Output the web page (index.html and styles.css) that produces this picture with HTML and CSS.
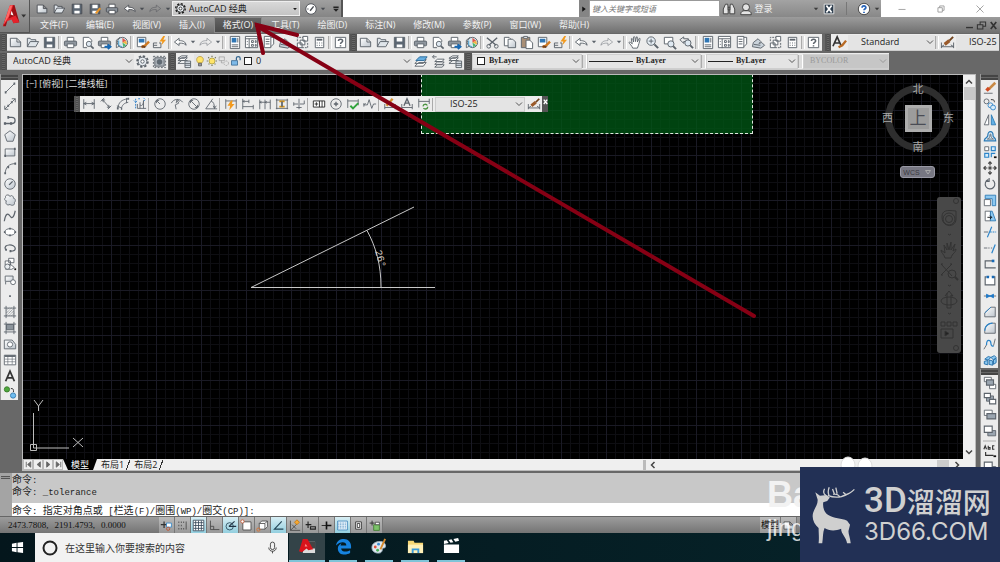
FILE: index.html
```html
<!DOCTYPE html>
<html lang="zh-CN">
<head>
<meta charset="utf-8">
<title>AutoCAD 经典</title>
<link rel="stylesheet" href="styles.css">
</head>
<body>
<svg class="defs" aria-hidden="true">
<defs>
<linearGradient id="gb" x1="0" y1="0" x2="1" y2="1"><stop offset="0" stop-color="#fff"/><stop offset="1" stop-color="#bcc4cc"/></linearGradient>
<symbol id="new" viewBox="0 0 16 16"><path fill="url(#gb)" d="M2.500 3.500h7l4 4v5h-11zM9.500 3.500v4h4"/></symbol>
<symbol id="open" viewBox="0 0 16 16"><path fill="#dfe5ea" d="M2.500 12.500v-9h3l1 1.500h5v2M2.500 12.500l3-5.500h9l-3 5.500z"/></symbol>
<symbol id="save" viewBox="0 0 16 16"><path fill="#5b6672" d="M2.500 2.500h11v11h-11z"/><path fill="#fff" stroke="none" d="M5 3h6v4H5zM5 10h6v3H5z"/></symbol>
<symbol id="saveas" viewBox="0 0 16 16"><use href="#save"/><path stroke="#e8962a" stroke-width="2.500" d="M14 7l-5 6"/></symbol>
<symbol id="print" viewBox="0 0 16 16"><path fill="#fff" d="M4.500 6.500v-4h7v4"/><rect x="1.500" y="6.500" width="13" height="5" rx="1" fill="#8e969e"/><path fill="#fff" d="M4.500 9.500h7v4h-7z"/></symbol>
<symbol id="preview" viewBox="0 0 16 16"><path fill="#fff" d="M3.500 13.500v-11h6l3 3v2M3.500 13.500h4"/><circle cx="9.500" cy="9.500" r="2.800" fill="#dfe9f2"/><path stroke-width="1.800" d="M11.500 11.500l3 3"/></symbol>
<symbol id="plot" viewBox="0 0 16 16"><use href="#print"/><path stroke="#1769b5" stroke-width="2" d="M8 12.500h5M11.500 10l3 2.500-3 2.500"/></symbol>
<symbol id="globe" viewBox="0 0 16 16"><path fill="#fff" d="M2.500 5.500l4-3v9l-4 2z"/><circle cx="9" cy="8" r="5.500" fill="#d9e8ef"/><path stroke="none" fill="#e2574c" d="M9 3l4 3-4 2z"/><path stroke="none" fill="#f2b43c" d="M13 6l1 4-5-2z"/><path stroke="none" fill="#4bb36c" d="M9 8l4 3-3 2z"/><path stroke="#3f95c9" d="M5 6v5l4 2"/></symbol>
<symbol id="match" viewBox="0 0 16 16"><path fill="#fff" d="M2.500 2.500h9v10h-9z"/><path stroke="none" fill="#2f76b4" d="M4 4h6v4H4z"/><path stroke="#d07a22" stroke-width="2.500" d="M15 7l-4 4-4 2"/><path stroke="#704020" stroke-width="2" d="M7 12l4 1"/></symbol>
<symbol id="bolt" viewBox="0 0 16 16"><path d="M1.500 8.500v5h8v-5M1.500 8.500h4M1.500 11h4M9.500 8.500h-2"/><path stroke="none" fill="#f29a1f" d="M12 1L8 7h3l-1 4 5-6h-3l2-4z"/></symbol>
<symbol id="undo" viewBox="0 0 16 16"><path fill="#fff" d="M1.500 7.500l5-4v2.500c4 0 7 1 7.500 5-1.500-2-4-2.500-7.500-2.300v2.500z"/></symbol>
<symbol id="redo" viewBox="0 0 16 16"><path fill="none" opacity=".5" d="M14.500 7.500l-5-4v2.500c-4 0-7 1-7.500 5 1.500-2 4-2.500 7.500-2.300v2.500z"/></symbol>
<symbol id="down" viewBox="0 0 8 16"><path stroke="none" fill="currentColor" d="M1.500 6.500h5l-2.500 3z"/></symbol>
<symbol id="chev" viewBox="0 0 8 8"><path d="M1 2.500l3 3 3-3"/></symbol>
<symbol id="props" viewBox="0 0 16 16"><path fill="#fff" d="M3.500 1.500h10v13h-10z"/><path stroke="none" fill="#2f76b4" d="M5 3h5v5H5z"/><path d="M5 10.500h7M5 12.500h7M11.500 3v5"/></symbol>
<symbol id="dc" viewBox="0 0 16 16"><path fill="#fff" d="M1.500 1.500h13v12h-13z"/><path d="M1.500 4h13M5.500 4v10M8 6h2v2H8zM12 6h1v2h-1zM8 10h2v2H8zM12 10h1v2h-1zM3 7h1M3 10h1"/></symbol>
<symbol id="pal" viewBox="0 0 16 16"><path fill="#fff" d="M3.500 1.500h7v12h-7zM10.500 2.500h3v7l-3 3M5 4.500h4M5 7h4M5 9.500h4"/></symbol>
<symbol id="sheet" viewBox="0 0 16 16"><path fill="#c9d2da" d="M2.500 8l5-4 3 3-2 2 3-1 3 3-4 3-9-1.500zM3 10l7 1"/></symbol>
<symbol id="mark" viewBox="0 0 16 16"><path stroke-dasharray="2 1" d="M2.500 6.500v-4h6M13.500 8.500v5h-6"/><path fill="#fff" d="M8.500 1.500h5v5h-5zM2.500 8.500h5v5h-5zM5.500 5.500h5v5h-5z"/></symbol>
<symbol id="calc" viewBox="0 0 16 16"><path fill="#fff" d="M3.500 2.500h9v11h-9z"/><path stroke-width="2" d="M5 5h6"/><path d="M5 8.500h1M7.500 8.500h1M10 8.500h1M5 11h1M7.500 11h1M10 11h1"/></symbol>
<symbol id="help" viewBox="0 0 16 16"><path fill="#fff" d="M2.500 2.500h11v11h-11z"/><path stroke-width="1.600" d="M5.800 6.300c0-2.500 4.500-2.500 4.500 0 0 1.500-2.300 1.500-2.300 3.200M8 11v1.300"/></symbol>
<symbol id="cut" viewBox="0 0 16 16"><path stroke-width="1.500" d="M2 3l10 8M13 3L4 11"/><circle cx="4" cy="12" r="2"/><circle cx="12" cy="12" r="2"/></symbol>
<symbol id="copy" viewBox="0 0 16 16"><path fill="#fff" d="M2.500 2.500h5l2 2v7h-7z"/><path fill="url(#gb)" d="M6.500 4.500h5l3 3v6h-8z"/></symbol>
<symbol id="paste" viewBox="0 0 16 16"><path fill="#a98f76" d="M2.500 2.500h9v11h-9z"/><path fill="#fff" d="M7.500 5.500h4l3 3v6h-7zM5 1.500h4v2H5z"/></symbol>
<symbol id="pan" viewBox="0 0 16 16"><path fill="#fff" d="M5 14c-1-3-3-4-4-6 1-1 2 0 3.500 1.500L3.500 4c1-1 1.500 0 2.500 3.500V2c1-1 1.700 0 2 5l1-5c1-.7 1.500.2 1 5.500l2-4c1-.3 1.300.4-.3 5.500-.5 2-1 3-1.700 5z"/></symbol>
<symbol id="zoom" viewBox="0 0 16 16"><circle cx="6.500" cy="6.500" r="4.500" fill="#e6eef5"/><path d="M4 6.500h5M6.500 4v5"/><path stroke-width="2.200" d="M10 10l4 4"/></symbol>
<symbol id="zwin" viewBox="0 0 16 16"><path fill="#fff" d="M2.500 2.500h9v7h-9z"/><circle cx="9.500" cy="9.500" r="3.300" fill="#dfe9f2"/><path stroke-width="2" d="M12 12l3 3"/></symbol>
<symbol id="zprev" viewBox="0 0 16 16"><path d="M1 5l4-3v2h5v3H5v2z"/><circle cx="9.500" cy="8.500" r="3.300" fill="#dfe9f2"/><path stroke-width="2" d="M12 11l3 3"/></symbol>
<symbol id="tstyle" viewBox="0 0 16 16"><path stroke-width="1.800" stroke="#333" d="M1 12L5.500 2 10 12M3 8.500h5"/><path stroke="#b86a24" stroke-width="2.500" d="M15 6l-4 5-4 2"/></symbol>
<symbol id="dstyle" viewBox="0 0 16 16"><path d="M1.500 8v6M14.500 8v6M1.500 12.500h13M1.500 12.500l3-2M14.500 12.500l-3-2"/><path stroke="#9a5a2a" stroke-width="3.500" d="M5 10l5-4"/><path stroke="#70421c" stroke-width="2" d="M10 6l4-4"/></symbol>
<symbol id="gear" viewBox="0 0 16 16"><circle cx="8" cy="8" r="5.800" stroke-width="1.800" stroke-dasharray="2.500 2"/><circle cx="8" cy="8" r="4.600" fill="#e8edf2"/><circle cx="8" cy="8" r="1.800" fill="#fff"/></symbol>
<symbol id="selws" viewBox="0 0 16 16"><path fill="#aab1b8" d="M3 4h10v9H3z"/><path stroke-dasharray="2 1.500" d="M1.500 2.500h13v12h-13z"/><circle cx="8" cy="8.500" r="2.500" fill="#5f6a74"/></symbol>
<symbol id="layers" viewBox="0 0 16 16"><path fill="#fff" d="M1 10l4-3h6l-3 3zM1 7l4-3h6l-3 3zM1 4.500L5 2h6L8 4.500z"/><path fill="#dfe6ec" d="M8.500 7.500h6v7h-6zM8.500 10h6M8.500 12h6"/></symbol>
<symbol id="bulb" viewBox="0 0 16 16"><path stroke="#b5953a" fill="#ffe469" d="M5.500 10.500C2 7 3.500 2 8 2s6 5 2.500 8.500z"/><path fill="#999" d="M6 11h4v3.500H6z"/></symbol>
<symbol id="sun" viewBox="0 0 16 16"><path stroke="#6d6f50" stroke-dasharray="1.500 1.500" stroke-width="1.500" d="M8 1v14M1 8h14M3 3l10 10M13 3L3 13"/><circle cx="8" cy="8" r="4" fill="#ffe469" stroke="#a99b3c"/></symbol>
<symbol id="frz" viewBox="0 0 16 16"><path opacity=".45" d="M1.500 2.500h7v5h-7zM4.500 7.500v3h3"/><circle cx="11" cy="11" r="3" opacity=".45" stroke-dasharray="2 1"/></symbol>
<symbol id="lock" viewBox="0 0 16 16"><path fill="#7db9e8" stroke="#31638c" d="M2 7.500h8v6H2z"/><path stroke="#31638c" stroke-width="1.600" d="M8.500 7V4c0-2.500 5-2.500 5 0v3"/></symbol>
<symbol id="lay1" viewBox="0 0 16 16"><path fill="#fff" d="M1 13l4-4h8l-3 4zM1 10l4-4h8l-3 4z"/><path fill="#66aee0" stroke="#2b6b9c" d="M2 7l4-4h8l-3 4z"/></symbol>
<symbol id="lay2" viewBox="0 0 16 16"><path fill="#fff" d="M4 14l3-2.500h7L12 14zM4 11l3-2.500h7L12 11zM4 8l3-2.500h7L12 8z"/><path d="M6 3H2M3.500 1L1.500 3l2 2"/></symbol>
<symbol id="dlin" viewBox="0 0 16 16"><path d="M2 2.500v11M14 2.500v11M2 7.500h12M5 6l-3 1.500L5 9M11 6l3 1.500L11 9"/></symbol>
<symbol id="dali" viewBox="0 0 16 16"><path d="M2 5l4-4M10 14l4-4M4 3l8 9M4 3l1 3M4 3l3 .5M12 12l-1-3M12 12l-3-.5"/></symbol>
<symbol id="darc" viewBox="0 0 16 16"><path d="M2 13C3 6 6 3 14 2M6 14c1-5 3-7 8-8M1 10l6 3M12 1v6"/><path stroke-width="2.500" d="M1 13h2M13 2h2M6 13.500h1"/></symbol>
<symbol id="dord" viewBox="0 0 16 16"><path stroke="#1e78c8" stroke-dasharray="2 1" d="M3 2v12M1 4l2 2 2-2M6 2h3M12 1l2 2-2 2"/><path d="M5 8v5h10M8 6v7M8 9c2 2 4 0 4-5M12 4v9"/></symbol>
<symbol id="drad" viewBox="0 0 16 16"><circle cx="8" cy="8" r="6"/><path d="M8 8L4 4M4 7V4h3"/></symbol>
<symbol id="djog" viewBox="0 0 16 16"><path d="M1.500 7C4 2 11 1 14.500 6M8 4l2 3-4 2 1 5M7 7l1-4 3 2"/></symbol>
<symbol id="ddia" viewBox="0 0 16 16"><circle cx="8" cy="8" r="6"/><path d="M4 4l8 8M4 7V4h3M12 9v3H9"/></symbol>
<symbol id="dang" viewBox="0 0 16 16"><path d="M15 13.500H2L10 2M8 4.500c3 1 4 4 4 9M12 13l-1.500-3M12 13l2-3"/></symbol>
<symbol id="dq" viewBox="0 0 16 16"><path d="M2 2.500v11M14 2.500v11M2 4.500h12"/><path stroke="none" fill="#f29a1f" d="M8 4L4 10h3l-1 5 6-7H9l1-4z"/></symbol>
<symbol id="dbase" viewBox="0 0 16 16"><path d="M2 2v12M2 5h7M9 3v4M2 11h12M14 9v5M4 4L2 5l2 1"/></symbol>
<symbol id="dcont" viewBox="0 0 16 16"><path d="M2 3v11M8 3v11M14 3v11M2 6h12M4 5L2 6l2 1M10 5L8 6l2 1"/></symbol>
<symbol id="dspc" viewBox="0 0 16 16"><path d="M2 2v12M14 2v12M1 3.500h14M1 13h14"/><path stroke="#d99412" stroke-width="2" d="M5 5h6M5 11h6"/><path stroke-width="2" d="M8 5v6"/></symbol>
<symbol id="dbrk" viewBox="0 0 16 16"><path d="M2 8h5M9 8h5M2 10v-4M14 4v4M8 2v12M5 12h6"/></symbol>
<symbol id="tol" viewBox="0 0 16 16"><path fill="#fff" stroke="#222" d="M1.500 4.500h13v7h-13zM8.500 4.500v7M11.500 4.500v7M3 8h4M5 6v4"/></symbol>
<symbol id="cen" viewBox="0 0 16 16"><circle cx="8" cy="8" r="6"/><path stroke-width="1.500" d="M5.500 8h5M8 5.500v5"/></symbol>
<symbol id="insp" viewBox="0 0 16 16"><path d="M2 2.500v10M14 2.500v7M2 4.500h12"/><path stroke="#2fa33b" stroke-width="2.200" d="M5 10l3 3 6-6"/></symbol>
<symbol id="jogl" viewBox="0 0 16 16"><path d="M1 9h4l2-6 3 10 2-5h3M1 7v4M1 9l2-2"/></symbol>
<symbol id="dedit" viewBox="0 0 16 16"><path d="M2 8v6M14 8v6M2 12h12"/><path stroke="#d5902e" stroke-width="2.600" d="M4 10l7-8"/></symbol>
<symbol id="dtext" viewBox="0 0 16 16"><path d="M2 8v6M14 8v6M2 12h12"/><path stroke-width="1.500" d="M4.500 10L8 2l3.500 8M6 7h4"/></symbol>
<symbol id="dupd" viewBox="0 0 16 16"><path d="M2 2v10M14 2v6M2 5h12"/><circle cx="9.500" cy="11" r="2.700" stroke="#4a9440" stroke-width="1.500" stroke-dasharray="6 2"/></symbol>
<symbol id="line" viewBox="0 0 16 16"><path d="M3 13L13 3"/><path stroke-width="2.500" d="M2 13h2M12 3h2"/></symbol>
<symbol id="xline" viewBox="0 0 16 16"><path d="M2 14L14 2M2 10v4h4M14 6V2h-4"/><path stroke-width="2.500" d="M5 10h2M9 6h2"/></symbol>
<symbol id="pline" viewBox="0 0 16 16"><path stroke-width="1.500" d="M2 12h8c5 0 5-7 0-7H6"/><path stroke-width="3" d="M1 12h2.500M8 12h2.500M5 5h2"/></symbol>
<symbol id="poly" viewBox="0 0 16 16"><path fill="url(#gb)" d="M8 2l6 4.500L11.500 14h-7L2 6.500z"/></symbol>
<symbol id="rect" viewBox="0 0 16 16"><path fill="url(#gb)" d="M2.500 4.500h11v8h-11z"/><path stroke-width="2.500" d="M1.500 12.500h2M12.500 4.500h2"/></symbol>
<symbol id="arc" viewBox="0 0 16 16"><path d="M2.500 14C3 7 7 3 14 3"/><path stroke-width="2.500" d="M1.500 14h2M5 7h2M13 3h2"/></symbol>
<symbol id="circ" viewBox="0 0 16 16"><circle cx="8" cy="8" r="6" fill="url(#gb)"/><path stroke-width="1.600" d="M7 9l4-4"/></symbol>
<symbol id="cloud" viewBox="0 0 16 16"><path fill="url(#gb)" d="M8 4c-1-3-6-2-5 1-2 2-1 4 1 4-2 3 1 6 4 4 2 2 6 1 5-2 2-2 1-5-1-5 0-3-3-4-4-2z"/></symbol>
<symbol id="spl" viewBox="0 0 16 16"><path d="M1.500 14C3 4 6 5 8 8s4 3 6-6" stroke-width="1.400"/></symbol>
<symbol id="ell" viewBox="0 0 16 16"><ellipse cx="8" cy="8" rx="6" ry="3.800" fill="#fff"/><path stroke-width="2" d="M7 4.200h2M7 11.800h2M1 8h2M13 8h2"/></symbol>
<symbol id="earc" viewBox="0 0 16 16"><path stroke-width="1.400" d="M3 10c-4-7 11-7 11-1.500 0 2-2 3-5 3"/><path stroke-width="2.500" d="M2.500 10h2M7.500 11.500h2"/></symbol>
<symbol id="ins" viewBox="0 0 16 16"><path fill="#fff" d="M6.500 1.500h6v5h-6zM2.500 4.500h6v5h-6zM8 8l5 4-3 2H3v-3z"/><circle cx="5" cy="11" r="3" fill="#e9edf0"/><path stroke="#111" stroke-width="2" d="M13 14h2"/></symbol>
<symbol id="blk" viewBox="0 0 16 16"><path fill="url(#gb)" d="M2.500 3.500h9v6h-9zM3 10v3"/><circle cx="11.500" cy="10.500" r="2.800" fill="#fff"/></symbol>
<symbol id="pt" viewBox="0 0 16 16"><path stroke-width="2" d="M7 8h2"/></symbol>
<symbol id="hat" viewBox="0 0 16 16"><path d="M1 3.500h14M1 12.500h14M3.500 1v14M12.500 1v14"/><path stroke-dasharray="1 1" d="M4 6l3-3M4 9l6-6M4 12l8-8M7 12l5-5M10 12l3-3"/></symbol>
<symbol id="grad" viewBox="0 0 16 16"><path fill="#8c949b" d="M4 4h8v6H4z"/><path d="M1 3.500h14M1 12.500h14M3.500 1v14M12.500 1v14"/></symbol>
<symbol id="reg" viewBox="0 0 16 16"><path fill="url(#gb)" d="M1.500 3.500h9l4 5v5h-13z"/><circle cx="8" cy="8.500" r="3" fill="#fff"/></symbol>
<symbol id="tab" viewBox="0 0 16 16"><path fill="#fff" d="M1.500 2.500h13v11h-13z"/><path stroke-width="2" d="M2 3.500h12"/><path opacity=".7" d="M2 7h12M2 10h12M5.500 4v9M10.500 4v9"/></symbol>
<symbol id="txt" viewBox="0 0 16 16"><path stroke="#333" stroke-width="2" d="M3 14L8 2.500 13 14M5 10h6"/></symbol>
<symbol id="adds" viewBox="0 0 16 16"><circle cx="4.500" cy="5" r="3" fill="#4fa83d" stroke="#3a7a2d"/><circle cx="11.500" cy="12" r="3" fill="#6ebcf0" stroke="#3279ad"/><path stroke="#222" d="M9 4c3 0 3 1 3 4"/></symbol>
<symbol id="erase" viewBox="0 0 16 16"><path stroke="#c98a45" stroke-width="3" d="M14 2L7 9"/><path stroke="#d14a22" stroke-width="4" d="M7 8l-3 3"/><path d="M1 14h10"/></symbol>
<symbol id="cpo" viewBox="0 0 16 16"><circle cx="4" cy="5" r="2.800"/><path stroke="#222" d="M9 3c4 0 4 1 4 3"/><circle cx="8.500" cy="9.500" r="2.800" stroke="#2b84c9"/><circle cx="11.500" cy="12" r="2.800" stroke="#2b84c9" fill="#d7ecfa"/></symbol>
<symbol id="mir" viewBox="0 0 16 16"><path fill="#fff" d="M6.500 2v11.500h-5z"/><path fill="#62b1e6" stroke="#2b7ab5" d="M9.500 2v11.500h5z"/></symbol>
<symbol id="off" viewBox="0 0 16 16"><path fill="#d5e9f7" stroke="#2b7ab5" stroke-width="1.400" d="M1.500 13.500c0-4 4-3 4-6 0-6 6-6 6 0-.5 2 3 2 3 6z"/><path d="M5 11.500c2-1 3-2 3-5 0-1 1-1 1 0 0 3 1 4 3 5z"/></symbol>
<symbol id="arr" viewBox="0 0 16 16"><path fill="#fff" d="M2 2h4.500v4.500H2z"/><path stroke="#2b84c9" fill="#d7ecfa" stroke-width="1.300" d="M9.500 2H14v4.500H9.500zM2 9.500h4.500V14H2zM9.500 14V9.500H14"/><path stroke="#111" stroke-width="2" d="M12.500 14h3"/></symbol>
<symbol id="move" viewBox="0 0 16 16"><path stroke-width="1.400" stroke="#444" d="M8 1v4M8 11v4M1 8h4M11 8h4M6 3l2-2 2 2M6 13l2 2 2-2M3 6L1 8l2 2M13 6l2 2-2 2M7 7h2v2H7z"/></symbol>
<symbol id="rot" viewBox="0 0 16 16"><path stroke-width="1.300" d="M6 3a5.500 5.500 0 1 0 5 .5M7 1v4H3"/></symbol>
<symbol id="scale" viewBox="0 0 16 16"><path fill="#8cc8f0" stroke="#2b7ab5" d="M2.500 2.500h12v12h-4v-8h-8z"/><path fill="#fff" d="M1.500 7.500h7v7h-7z"/></symbol>
<symbol id="str" viewBox="0 0 16 16"><path fill="#fff" d="M2.500 2.500h6v11h-6z"/><path fill="#8cc8f0" stroke="#2b7ab5" d="M8.500 2.500h2l4 11h-6z"/><path stroke="#111" d="M5 9.500h5M8 7.500l2 2-2 2"/></symbol>
<symbol id="trim" viewBox="0 0 16 16"><path d="M1 8h5"/><path stroke="#2b84c9" stroke-width="1.300" d="M5 14L10 2M8 8h2M11 8h2M14 8h1"/></symbol>
<symbol id="ext" viewBox="0 0 16 16"><path d="M1 8h4M6 8h1.500M9 8h1.500"/><path stroke="#2b84c9" stroke-width="1.400" d="M10 14l4-10"/></symbol>
<symbol id="bpt" viewBox="0 0 16 16"><path stroke-width="1.300" d="M12 4.500H2.500v8h12"/><path stroke="#1769b5" stroke-width="3" d="M10 4.500h3"/></symbol>
<symbol id="brk" viewBox="0 0 16 16"><path fill="#fff" stroke-width="1.300" d="M4 4.500H2.500v9h11v-9H12"/><path stroke="#1769b5" stroke-width="3" d="M4 4.500h3M10 4.500h3"/></symbol>
<symbol id="join" viewBox="0 0 16 16"><path d="M1 8h14"/><path fill="#1e78c8" stroke="#1e78c8" d="M4 6l4 2-4 2zM12 6L8 8l4 2z"/></symbol>
<symbol id="cham" viewBox="0 0 16 16"><path fill="url(#gb)" d="M2 13.500V9l7-6.500h5v11z"/><path stroke="#2b84c9" d="M2 9l7-6.500"/></symbol>
<symbol id="fil" viewBox="0 0 16 16"><path fill="url(#gb)" d="M2 14v-3c0-5 4-8.500 9-8.500h3V14z"/><path stroke="#2b84c9" stroke-width="1.400" d="M2 11c0-5 4-8.500 9-8.500"/></symbol>
<symbol id="blend" viewBox="0 0 16 16"><path d="M1 14l3-5M12 10l2-8"/><path stroke="#2b84c9" stroke-width="1.400" d="M4 9c0-8 5-5 5-2s2 4 3 3"/></symbol>
<symbol id="expl" viewBox="0 0 16 16"><path fill="#8cc8f0" stroke="#1f6ba8" d="M2 7l4-3 3 1-3 3zM9 5l4-2 2 2-3 3zM1.500 9.500l4-1v5l-4-1zM7 8l4 1v5l-4-1zM12 8l3-2v5l-3 2z"/></symbol>
<symbol id="o1" viewBox="0 0 16 16"><path fill="#fff" d="M1.500 1.500h8v5h-8zM7.500 9.500h7v5h-7z"/><path fill="#9aa5b0" stroke-width="1.300" d="M4 4.500h8v6H4z"/></symbol>
<symbol id="o2" viewBox="0 0 16 16"><path fill="#9aa5b0" d="M4 4.500h8v6H4z"/><path fill="#fff" stroke-width="1.300" d="M1.500 1.500h7v5h-7zM7.500 8.500h7v5h-7z"/></symbol>
<symbol id="o3" viewBox="0 0 16 16"><path fill="#fff" d="M1.500 2.500h9v6h-9z"/><path fill="#9aa5b0" stroke-width="1.300" d="M4.500 6.500h10v6h-10z"/></symbol>
<symbol id="o4" viewBox="0 0 16 16"><path fill="#9aa5b0" d="M5.500 7.500h9v6h-9z"/><path fill="#fff" stroke-width="1.300" d="M1.500 2.500h9v7h-9z"/></symbol>
<symbol id="o5" viewBox="0 0 16 16"><path stroke-width="1.300" stroke="#333" d="M1 6l1.500-4L4 6M6 2v4h2V4H6M13 2h-2v4h2M3 9v4h9"/><path stroke="#111" stroke-width="2" d="M12 14h3"/></symbol>
<symbol id="s1" viewBox="0 0 16 16"><path stroke-width="1.500" stroke="#333" d="M1 7h8M5 3v8"/><path fill="#fff" stroke="#2b84c9" d="M8 5h6v5H8z"/><circle cx="10" cy="12" r="2" stroke="#c4512c"/></symbol>
<symbol id="s2" viewBox="0 0 16 16"><path stroke-dasharray="1 2" stroke-width="2" d="M3 4h9M3 8h6M3 12h9"/><path d="M12.500 3v10"/></symbol>
<symbol id="s3" viewBox="0 0 16 16"><path stroke="#345" fill="#fff" d="M1.500 1.500h13v13h-13zM4.500 2v12M8 2v12M11.500 2v12M2 4.500h12M2 8h12M2 11.500h12"/></symbol>
<symbol id="s4" viewBox="0 0 16 16"><path d="M3 2v11h11M3 9h4v4"/></symbol>
<symbol id="s5" viewBox="0 0 16 16"><circle cx="7" cy="9" r="4.500" stroke="#245"/><path stroke="#234" stroke-width="1.400" d="M6 9l7-6M6 9h9"/></symbol>
<symbol id="s6" viewBox="0 0 16 16"><path fill="#fff" d="M3.500 3.500h10v10h-10z"/><circle cx="3" cy="3" r="2" stroke="#c4512c" fill="#fff"/></symbol>
<symbol id="s7" viewBox="0 0 16 16"><path fill="#fff" d="M4 5.500l3-3h7v7l-3 3H4zM4 5.500h7v7M11 5.500l3-3"/><circle cx="3" cy="13" r="2" stroke="#e0702a"/></symbol>
<symbol id="s8" viewBox="0 0 16 16"><path stroke="#245" stroke-width="1.400" d="M12 3L3 12.500h11"/></symbol>
<symbol id="s9" viewBox="0 0 16 16"><path d="M3 2v12h12M3 14l8-8M5 7l5 5"/><path fill="#f6a832" stroke="#c47810" d="M11 1l3 3-3 3-3-3z"/></symbol>
<symbol id="s10" viewBox="0 0 16 16"><path stroke="#222" stroke-width="1.400" d="M2 7h7M5 3v8M8 9.500h6v3H8z"/></symbol>
<symbol id="s11" viewBox="0 0 16 16"><path stroke="#111" stroke-width="2" d="M8 3v10M8 8h6"/><path stroke="#111" d="M2 8h6"/></symbol>
<symbol id="s12" viewBox="0 0 16 16"><path fill="#eaf4fb" stroke="#3b83ba" d="M2 2.500h12v11H2z"/><path stroke="#3b83ba" stroke-dasharray="1 1" d="M3 5h10M3 7h10M3 9h10M3 11h10"/></symbol>
<symbol id="s13" viewBox="0 0 16 16"><path fill="#fff" stroke="#222" d="M4.500 3.500h7v9h-7zM6.500 5.500h3v5h-3z"/></symbol>
<symbol id="s14" viewBox="0 0 16 16"><path stroke="#222" d="M2 5h6M5 2v6"/><path fill="#7cc36a" stroke="#3c7a2e" d="M7 7h7v7H7z"/><path fill="#fff" d="M9 4h5v3H9z"/></symbol>
</defs>
</svg>

<div class="app">
<header class="head">
  <button class="logo" title="应用程序菜单">
    <svg viewBox="0 0 30 30"><path fill="#9c1015" d="M3 25L11 3h4l5 18-6 1-2-5-4 1-2 7z"/><path fill="#e5222b" d="M3 25L10 4l4-1-5 14 7-3 4 7-6 1-2-4-5 2z"/><path fill="#ff6a66" d="M10 4l3-1-4 12-5 8z"/><path fill="#fff" d="M11 13l1-4 2 5z"/><path fill="#333" d="M22 13h5l-2.500 3z"/></svg>
  </button>
  <div class="title">
    <div class="quick">
      <button title="新建"><svg><use href="#new"/></svg></button><button title="打开"><svg><use href="#open"/></svg></button><button title="保存"><svg><use href="#save"/></svg></button><button title="另存为"><svg><use href="#saveas"/></svg></button><button title="打印"><svg><use href="#print"/></svg></button><button title="放弃"><svg><use href="#undo"/></svg></button><button class="dd" title="放弃列表"><svg><use href="#down"/></svg></button><button title="重做"><svg><use href="#redo"/></svg></button><button class="dd" title="重做列表"><svg><use href="#down"/></svg></button>
      <label class="combo space"><svg class="ci"><use href="#gear"/></svg><select aria-label="工作空间"><option>AutoCAD 经典</option></select><svg class="tri"><use href="#down"/></svg></label>
      <button title="性能"><svg viewBox="0 0 16 16"><circle cx="8" cy="8" r="6" fill="#fff"/><path stroke-width="1.600" d="M7 10l4-5M4 8h1"/></svg></button><button class="dd" title="列表"><svg><use href="#down"/></svg></button><button class="dd last" title="自定义"><svg viewBox="0 0 8 16"><path stroke="none" fill="#222" d="M1 5h6v2H1zM1 8h6l-3 3z"/></svg></button>
    </div>
    <div class="grow"></div>
    <div class="search"><button title="展开"><svg viewBox="0 0 8 16"><path fill="#111" stroke="none" d="M2 5v6l4-3z"/></svg></button><input type="text" aria-label="搜索" placeholder="键入关键字或短语"></div>
    <div class="info">
      <button title="查找"><svg viewBox="0 0 16 16"><path fill="#e4e4e4" d="M4 2.500h2.500l.5 5v6H1.500V8zM12 2.500H9.500l-.5 5v6h5.500V8zM7 6h2v3H7z"/></svg></button><button class="user" title="登录"><svg viewBox="0 0 16 16"><circle cx="8" cy="6" r="4" fill="#e4e4e4"/><path fill="#e4e4e4" d="M2 14.500c0-4 2-4 4-4.500h4c2 .5 4 .5 4 4.500z"/></svg>登录</button>
      <span class="grow2"></span>
      <button class="dd" title="登录选项"><svg><use href="#down"/></svg></button><button title="Exchange"><svg viewBox="0 0 16 16"><path fill="#2c3c4c" stroke="#eee" d="M2.500 2.500h11v11h-11z"/><path stroke="#fff" stroke-width="2" d="M5 4l3 4-3 4M11 4L8 8l3 4"/></svg></button><i class="vs"></i><button title="帮助"><svg viewBox="0 0 16 16"><circle cx="8" cy="8" r="6.500" fill="#fff"/><path stroke="#2763b8" stroke-width="2" d="M5.800 6.500c0-3 4.500-2.500 4.300 0C10 8 8 8 8 9.500M8 11v1.500"/></svg></button><button class="dd" title="帮助选项"><svg><use href="#down"/></svg></button>
    </div>
    <div class="win"><button title="最小化"><svg viewBox="0 0 16 16"><path d="M4 8.500h8"/></svg></button><button title="还原"><svg viewBox="0 0 16 16"><path d="M4.500 6.500h5v5h-5zM6.500 6.500v-2h5v5h-2"/></svg></button><button title="关闭"><svg viewBox="0 0 16 16"><path d="M4 4l8 8M12 4l-8 8"/></svg></button></div>
  </div>
  <nav class="menu">
    <button>文件(F)</button><button>编辑(E)</button><button>视图(V)</button><button>插入(I)</button><button class="on">格式(O)</button><button>工具(T)</button><button>绘图(D)</button><button>标注(N)</button><button>修改(M)</button><button>参数(P)</button><button>窗口(W)</button><button>帮助(H)</button>
    <span class="doc"><button title="最小化文档"><svg viewBox="0 0 16 16"><path stroke-width="2" d="M3 11h10"/></svg></button><button title="还原文档"><svg viewBox="0 0 16 16"><path stroke-width="1.500" d="M2 7h8v6H2zM6 7V3h8v6h-4"/></svg></button><button title="关闭文档"><svg viewBox="0 0 16 16"><path stroke-width="2.500" d="M4 3l8 10M12 3L4 13"/></svg></button></span>
  </nav>
</header>

<div class="dock">
  <div class="row">
    <i class="grip"></i>
    <div class="tb"><button title="新建"><svg><use href="#new"/></svg></button><button title="打开"><svg><use href="#open"/></svg></button><button title="保存"><svg><use href="#save"/></svg></button><i></i><button title="打印"><svg><use href="#print"/></svg></button><button title="预览"><svg><use href="#preview"/></svg></button><button title="发布"><svg><use href="#plot"/></svg></button><button title="三维打印"><svg><use href="#globe"/></svg></button><i></i><button title="特性匹配"><svg><use href="#match"/></svg></button><button title="块编辑器"><svg><use href="#bolt"/></svg></button><i></i><button title="放弃"><svg><use href="#undo"/></svg></button><button class="dd" title="放弃列表"><svg><use href="#down"/></svg></button><button title="重做"><svg><use href="#redo"/></svg></button><button class="dd" title="重做列表"><svg><use href="#down"/></svg></button><i></i><button title="特性"><svg><use href="#props"/></svg></button><button title="设计中心"><svg><use href="#dc"/></svg></button><button title="工具选项板"><svg><use href="#pal"/></svg></button><button title="图纸集"><svg><use href="#sheet"/></svg></button><button title="标记集"><svg><use href="#mark"/></svg></button><button title="计算器"><svg><use href="#calc"/></svg></button><i></i><button title="帮助"><svg><use href="#help"/></svg></button></div>
    <i class="grip"></i>
    <div class="tb"><button title="新建"><svg><use href="#new"/></svg></button><button title="打开"><svg><use href="#open"/></svg></button><button title="保存"><svg><use href="#save"/></svg></button><i></i><button title="打印"><svg><use href="#print"/></svg></button><button title="预览"><svg><use href="#preview"/></svg></button><button title="发布"><svg><use href="#plot"/></svg></button><button title="三维打印"><svg><use href="#globe"/></svg></button><i></i><button title="剪切"><svg><use href="#cut"/></svg></button><button title="复制"><svg><use href="#copy"/></svg></button><button title="粘贴"><svg><use href="#paste"/></svg></button><button title="特性匹配"><svg><use href="#match"/></svg></button><button title="块编辑器"><svg><use href="#bolt"/></svg></button><i></i><button title="放弃"><svg><use href="#undo"/></svg></button><button class="dd" title="放弃列表"><svg><use href="#down"/></svg></button><button title="重做"><svg><use href="#redo"/></svg></button><button class="dd" title="重做列表"><svg><use href="#down"/></svg></button><i></i><button title="平移"><svg><use href="#pan"/></svg></button><button title="实时缩放"><svg><use href="#zoom"/></svg></button><button title="窗口缩放"><svg><use href="#zwin"/></svg></button><button title="缩放上一个"><svg><use href="#zprev"/></svg></button><i></i><button title="特性"><svg><use href="#props"/></svg></button><button title="设计中心"><svg><use href="#dc"/></svg></button><button title="工具选项板"><svg><use href="#pal"/></svg></button><button title="图纸集"><svg><use href="#sheet"/></svg></button><button title="标记集"><svg><use href="#mark"/></svg></button><button title="计算器"><svg><use href="#calc"/></svg></button><i></i><button title="帮助"><svg><use href="#help"/></svg></button></div>
    <i class="grip wide"></i>
    <div class="tb rest"><button title="文字样式"><svg><use href="#tstyle"/></svg></button><label class="combo std"><select aria-label="文字样式名"><option>Standard</option></select><svg class="cv"><use href="#chev"/></svg></label><i></i><button title="标注样式"><svg><use href="#dstyle"/></svg></button><label class="combo iso"><select aria-label="标注样式名"><option>ISO-25</option></select></label></div>
  </div>
  <div class="row">
    <i class="grip"></i>
    <div class="tb"><label class="combo ws"><select aria-label="工作空间名"><option>AutoCAD 经典</option></select><svg class="cv"><use href="#chev"/></svg></label><button title="工作空间设置"><svg><use href="#gear"/></svg></button><button title="我的工作空间"><svg><use href="#selws"/></svg></button></div>
    <i class="grip"></i>
    <div class="tb"><button title="图层特性"><svg><use href="#layers"/></svg></button><label class="combo layer"><svg class="li"><use href="#bulb"/></svg><svg class="li"><use href="#sun"/></svg><svg class="li"><use href="#frz"/></svg><svg class="li"><use href="#lock"/></svg><b class="sw"></b><select aria-label="图层"><option>0</option></select><svg class="cv"><use href="#chev"/></svg></label><button title="置为当前"><svg><use href="#lay1"/></svg></button><button title="上一个图层"><svg><use href="#lay2"/></svg></button><button title="图层状态"><svg><use href="#layers"/></svg></button></div>
    <i class="grip"></i>
    <div class="tb by"><label class="combo c1"><b class="sw"></b><select aria-label="颜色"><option>ByLayer</option></select><svg class="cv"><use href="#chev"/></svg></label><i></i><label class="combo c2"><b class="ln"></b><select aria-label="线型"><option>ByLayer</option></select><svg class="cv"><use href="#chev"/></svg></label><i></i><label class="combo c3"><b class="ln short"></b><select aria-label="线宽"><option>ByLayer</option></select><svg class="cv"><use href="#chev"/></svg></label><i></i><label class="combo c4"><select aria-label="打印样式" disabled><option>BYCOLOR</option></select><svg class="cv"><use href="#chev"/></svg></label></div>
  </div>
</div>

<main class="work">
  <div class="side"><i class="hgrip"></i>
    <button title="直线"><svg><use href="#line"/></svg></button><button title="构造线"><svg><use href="#xline"/></svg></button><button title="多段线"><svg><use href="#pline"/></svg></button><button title="多边形"><svg><use href="#poly"/></svg></button><button title="矩形"><svg><use href="#rect"/></svg></button><button title="圆弧"><svg><use href="#arc"/></svg></button><button title="圆"><svg><use href="#circ"/></svg></button><button title="修订云线"><svg><use href="#cloud"/></svg></button><button title="样条曲线"><svg><use href="#spl"/></svg></button><button title="椭圆"><svg><use href="#ell"/></svg></button><button title="椭圆弧"><svg><use href="#earc"/></svg></button><button title="插入块"><svg><use href="#ins"/></svg></button><button title="创建块"><svg><use href="#blk"/></svg></button><button title="点"><svg><use href="#pt"/></svg></button><button title="图案填充"><svg><use href="#hat"/></svg></button><button title="渐变色"><svg><use href="#grad"/></svg></button><button title="面域"><svg><use href="#reg"/></svg></button><button title="表格"><svg><use href="#tab"/></svg></button><button title="多行文字"><svg><use href="#txt"/></svg></button><button title="添加选定对象"><svg><use href="#adds"/></svg></button>
  </div>
  <section class="frame">
    <div class="canvas">
      <div class="sel"></div>
      <svg class="drawing" width="480" height="384"><path stroke="#c8c8c8" d="M228 212.500H412M228 212.500L391 132M344 155.500C353 172 358 190 358 212"/><path stroke="#bdbdbd" d="M10.500 338v35H46M7.500 369.500h6v6h-6zM11 325l4.500 6 4.500-6M15.500 331v5M50 363l10 9M60 363l-10 9"/><text x="352" y="176" transform="rotate(74 352 176)">26°</text></svg>
      <div class="vp">[−] [俯视] [二维线框]</div>
      <div class="cube"><span class="n">北</span><span class="w">西</span><button>上</button><span class="e">东</span><span class="s">南</span></div>
      <button class="wcs">WCS <svg viewBox="0 0 8 8"><path d="M1.500 2.500h5L4 6z" stroke="#aaa"/></svg></button>
      <div class="navbar"><svg viewBox="0 0 24 156"><circle cx="19" cy="4" r="2.500"/><path d="M5 20c0-7 5-7 14-6v8c0 9-14 9-14-2z"/><circle cx="12" cy="22" r="6"/><circle cx="12" cy="22" r="3.500"/><path d="M11 37l1.500 1 1.500-1M8 61c-1-4-4-5-4-8l4 3-1-8 3 5V46l2 7 2-8v8l4-6-2 7 3-2c0 4-4 4-5 9zM4 67l11 12M15 67L4 78M4 67h2M13 67h2M4 78h2"/><circle cx="15" cy="77" r="4"/><path stroke-width="2" d="M18 80l3 3"/><path d="M11 88l1.500 1 1.500-1"/><ellipse cx="12" cy="104" rx="8" ry="4"/><path d="M10 96v15h4V98l2 1-4-5-4 5M11 116l1.500 1 1.500-1M4 125h4v4H4zM10 125h4v4h-4zM16 125h4v4h-4zM4 132h12v9H4z"/><path fill="#222" d="M8 134v5l4-2.500z"/><circle cx="19" cy="151" r="2.500"/></svg></div>
      <div class="float"><i class="grip"></i><button title="线性"><svg><use href="#dlin"/></svg></button><button title="对齐"><svg><use href="#dali"/></svg></button><button title="弧长"><svg><use href="#darc"/></svg></button><button title="坐标"><svg><use href="#dord"/></svg></button><i></i><button title="半径"><svg><use href="#drad"/></svg></button><button title="折弯"><svg><use href="#djog"/></svg></button><button title="直径"><svg><use href="#ddia"/></svg></button><button title="角度"><svg><use href="#dang"/></svg></button><i></i><button title="快速标注"><svg><use href="#dq"/></svg></button><button title="基线"><svg><use href="#dbase"/></svg></button><button title="连续"><svg><use href="#dcont"/></svg></button><button title="等距标注"><svg><use href="#dspc"/></svg></button><button title="折断标注"><svg><use href="#dbrk"/></svg></button><i></i><button title="公差"><svg><use href="#tol"/></svg></button><button title="圆心标记"><svg><use href="#cen"/></svg></button><button title="检验"><svg><use href="#insp"/></svg></button><button title="折弯线性"><svg><use href="#jogl"/></svg></button><i></i><button title="编辑标注"><svg><use href="#dedit"/></svg></button><button title="编辑标注文字"><svg><use href="#dtext"/></svg></button><button title="标注更新"><svg><use href="#dupd"/></svg></button><i></i><label class="combo fiso"><select aria-label="标注样式控制"><option>ISO-25</option></select><svg class="cv"><use href="#chev"/></svg></label><button title="标注样式"><svg><use href="#dstyle"/></svg></button><button class="x" title="关闭"><svg viewBox="0 0 8 16"><path stroke="#fff" stroke-width="1.500" d="M2 3l4 5M6 3L2 8"/></svg></button></div>
    </div>
    <div class="vbar"><svg viewBox="0 0 8 8"><path d="M1 5.500l3-3 3 3"/></svg><b></b><svg class="end" viewBox="0 0 8 8"><path d="M1 2.500l3 3 3-3"/></svg></div>
    <div class="tabs">
      <div class="tnav"><button title="首个"><svg viewBox="0 0 10 10"><path d="M2.500 2v6"/><path fill="currentColor" d="M7.500 2v6L4 5z"/></svg></button><button title="上一个"><svg viewBox="0 0 10 10"><path fill="currentColor" d="M7 2v6L3.500 5z"/></svg></button><button title="下一个"><svg viewBox="0 0 10 10"><path fill="currentColor" d="M3 2v6l3.500-3z"/></svg></button><button title="末个"><svg viewBox="0 0 10 10"><path d="M7.500 2v6"/><path fill="currentColor" d="M2.500 2v6L6 5z"/></svg></button></div>
      <button class="tab on">模型</button><button class="tab">布局1</button><button class="tab">布局2</button>
      <span class="grow2"></span>
      <div class="hbar"><svg viewBox="0 0 8 8"><path d="M5.500 1l-3 3 3 3"/></svg><b></b><svg viewBox="0 0 8 8"><path d="M2.500 1l3 3-3 3"/></svg></div>
    </div>
  </section>
  <div class="rside">
    <div class="side"><i class="hgrip"></i>
      <button title="删除"><svg><use href="#erase"/></svg></button><button title="复制"><svg><use href="#cpo"/></svg></button><button title="镜像"><svg><use href="#mir"/></svg></button><button title="偏移"><svg><use href="#off"/></svg></button><button title="阵列"><svg><use href="#arr"/></svg></button><button title="移动"><svg><use href="#move"/></svg></button><button title="旋转"><svg><use href="#rot"/></svg></button><button title="缩放"><svg><use href="#scale"/></svg></button><button title="拉伸"><svg><use href="#str"/></svg></button><button title="修剪"><svg><use href="#trim"/></svg></button><button title="延伸"><svg><use href="#ext"/></svg></button><button title="打断于点"><svg><use href="#bpt"/></svg></button><button title="打断"><svg><use href="#brk"/></svg></button><button title="合并"><svg><use href="#join"/></svg></button><button title="倒角"><svg><use href="#cham"/></svg></button><button title="圆角"><svg><use href="#fil"/></svg></button><button title="光顺曲线"><svg><use href="#blend"/></svg></button><button title="分解"><svg><use href="#expl"/></svg></button>
    </div>
    <div class="side"><i class="hgrip"></i>
      <button title="前置"><svg><use href="#o1"/></svg></button><button title="后置"><svg><use href="#o2"/></svg></button><button title="置于对象之上"><svg><use href="#o3"/></svg></button><button title="置于对象之下"><svg><use href="#o4"/></svg></button><i class="hs"></i><button title="注释前置"><svg><use href="#o5"/></svg></button><button title="图案填充后置"><svg><use href="#o4"/></svg></button>
    </div>
  </div>
</main>

<section class="cmd">
  <i class="cgrip"></i>
  <div class="cbody">
    <div class="hist"><p><span>命令</span>:</p><p><span>命令</span>: _tolerance</p></div>
    <p class="prompt"><span>命令</span>: <span>指定对角点或</span> [<span>栏选</span>(F)/<span>圈围</span>(WP)/<span>圈交</span>(CP)]:</p>
  </div>
</section>

<footer class="status">
  <div class="xyz"><span>2473.7808,</span><span>2191.4793,</span><span>0.0000</span></div>
  <div class="modes"><button title="推断约束"><svg><use href="#s1"/></svg></button><button title="捕捉"><svg><use href="#s2"/></svg></button><button class="on" title="栅格"><svg><use href="#s3"/></svg></button><button title="正交"><svg><use href="#s4"/></svg></button><button class="on" title="极轴"><svg><use href="#s5"/></svg></button><button title="对象捕捉"><svg><use href="#s6"/></svg></button><button title="三维对象捕捉"><svg><use href="#s7"/></svg></button><button class="on" title="对象追踪"><svg><use href="#s8"/></svg></button><button title="动态UCS"><svg><use href="#s9"/></svg></button><button title="动态输入"><svg><use href="#s10"/></svg></button><button title="线宽"><svg><use href="#s11"/></svg></button><button class="on" title="透明度"><svg><use href="#s12"/></svg></button><button title="快捷特性"><svg><use href="#s13"/></svg></button><button title="选择循环"><svg><use href="#s14"/></svg></button></div>
  <span class="grow2"></span>
  <div class="modes model"><button class="m">模型</button><button title="快速查看布局"><svg><use href="#new"/></svg></button></div>
</footer>

<div class="task">
  <button class="start" title="开始"><svg viewBox="0 0 14 14"><path fill="#fff" stroke="none" d="M1 3l5-1v4.500H1zM7 1.800L13 1v5.500H7zM1 7.500h5V12l-5-1zM7 7.500h6V13l-6-.8z"/></svg></button>
  <div class="find"><svg viewBox="0 0 18 18"><circle cx="9" cy="9" r="6.500" stroke="#222" stroke-width="2"/></svg><input type="text" aria-label="搜索" placeholder="在这里输入你要搜索的内容"><svg viewBox="0 0 18 18"><rect x="6.500" y="2.500" width="5" height="9" rx="2.500" stroke="#333"/><path stroke="#333" d="M4.500 9c0 6 9 6 9 0M9 13.500V16"/></svg></div>
  <button class="app-i on" title="AutoCAD"><svg viewBox="0 0 18 18"><path fill="#ddd" stroke="none" d="M6 4h11v12H4z"/><path fill="#444" stroke="none" d="M9 4h8v7h-5z"/><path fill="#d8141c" stroke="none" d="M0 14L4 1h5l6 11-5 1-2-2-5 4z"/><path fill="#ff8a86" stroke="none" d="M6 9l1-3 2 3z"/></svg></button>
  <button class="app-i" title="Edge"><svg viewBox="0 0 18 18"><path fill="#1683e0" stroke="none" d="M1 8C2 3 5 1 9.500 1 14 1 17 4.500 17 8.500V11H6.500c.5 4 6 4 9.500 2v3c-5 3-13 2-13-5 0-3 2-4.500 4-5.500-1 1-1 1.500-1 2.500h6c0-5-7-4.500-11 0z"/></svg></button>
  <button class="app-i" title="画图"><svg viewBox="0 0 18 18"><path fill="#dfe9f0" stroke="#9fb2c0" d="M1 10c0-5 6-7 11-6 3 1 4 4 3 6-1 1-3 0-3 2s-1 4-4 4c-4 0-7-2-7-6z"/><circle cx="4.500" cy="9.500" r="1.500" fill="#e0503c" stroke="none"/><circle cx="8" cy="6.500" r="1.500" fill="#3d8fd6" stroke="none"/><circle cx="7" cy="13" r="1.500" fill="#4bb05a" stroke="none"/><path stroke="#d68a2c" stroke-width="2" d="M15 1l-5 11"/></svg></button>
  <button class="app-i" title="文件资源管理器"><svg viewBox="0 0 18 18"><path fill="#f7d774" stroke="none" d="M1 3h6l1 2h9v11H1z"/><path fill="#fff0b8" stroke="none" d="M1 7h16v9H1z"/><path fill="#3a9ad9" stroke="none" d="M5 11h8v5h-2v-3H7v3H5z"/></svg></button>
  <button class="app-i" title="电影和电视"><svg viewBox="0 0 18 18"><path fill="#fff" stroke="none" d="M1 7h16v9H1zM1 3l3-.6 2 3-5 1zM6 2l3-.6 2 3-3 .6zM11 1l5-1 1 3-4 1z"/></svg></button>
</div>

<svg class="paws" viewBox="0 0 34 14" aria-hidden="true"><ellipse cx="8" cy="8" rx="7" ry="8"/><ellipse cx="25" cy="9" rx="7" ry="8"/></svg>
<div class="wm"><b>Ba</b><span>jing</span></div>
<div class="brand">
  <svg viewBox="210 310 145 185"><path fill="#cfcfcf" stroke="none" d="M226 334l14 10 20-2 10 8-8 10-12 4c-2 14 2 30 14 38 18 12 42 10 58 18l9 12-4 16c-3 8 4 20 6 40h-11c-2-18-18-28-18-44-18 8-38 6-50-2-6 14-4 28-7 46h-11c2-18 0-30 0-46-14-12-22-30-16-48 6-16 14-24 13-38z"/><path stroke="#cfcfcf" stroke-width="4" d="M264 343c26 12 58 4 80-18M320 342l-10-8M300 348c-4-8-14-10-20-8M284 340l-6-16M292 338l-4-18M258 343c-8-4-8-12-4-20M268 345c-4-8-4-16 0-26M330 336l-24 10"/></svg>
  <div><p class="b1"><span>3D</span>溜溜网</p><p class="b2">3D66.COM</p></div>
</div>
<svg class="arrow" width="1000" height="562" aria-hidden="true"><path d="M754 316L257 26M297 35L257 25l6 28"/></svg>
</div>
</body>
</html>
```

FILE: styles.css
```css
* { box-sizing: border-box; }
body { margin: 0; overflow: hidden; font: 9px/12px "Open Sans", "Noto Sans CJK SC", sans-serif; color: #222; }
p { margin: 0; }
svg { fill: none; stroke: currentColor; display: block; flex: none; overflow: visible; }
.defs { position: absolute; width: 0; height: 0; }
button, input, select { font: inherit; color: inherit; background: none; border: 0; margin: 0; padding: 0; border-radius: 0; min-width: 0; }
button { display: flex; align-items: center; justify-content: center; white-space: nowrap; }
input { outline: none; }
.app { position: relative; height: 100vh; display: flex; flex-direction: column; background: #686868; overflow: hidden; }
.grow { flex: 1; background: #fff; }
.grow2 { flex: 1; }

.head { display: grid; grid-template-columns: 30px 1fr; grid-template-rows: 17px 16px; flex: none; }
.logo { grid-row: 1 / 3; background: linear-gradient(#a6a6a6, #7c7c7c); border: 1px solid #555; border-width: 0 1px 1px 0; }
.logo svg { width: 29px; height: 29px; stroke: none; }
.title { display: flex; min-width: 0; color: #484c52; }
.quick { width: 313px; padding-left: 3px; display: flex; align-items: center; background: linear-gradient(#a0a0a0, #858585); border-right: 2px solid #555; }
.quick > button { width: 18px; }
.quick button svg, .info button svg { width: 14px; height: 14px; }
.quick > button.dd, .info > button.dd { width: 8px; }
.quick > button.last { margin-left: 4px; width: 10px; }
.quick .dd svg, .info .dd svg, .dd svg { width: 8px; height: 14px; }
.combo { display: flex; align-items: center; height: 15px; background: #e4e4e4; color: #1c1c1c; min-width: 0; }
.combo select { appearance: none; flex: 1; outline: none; height: 15px; opacity: 1; }
.cv { width: 8px; height: 8px; margin-right: 1px; color: #555; }
.space { width: 131px; background: linear-gradient(#d8d8d8, #c4c4c4); border: 1px solid #eee; margin-right: 2px; }
.ci { width: 13px; height: 13px; margin: 0 2px 0 1px; }
.tri { width: 8px; height: 12px; }
.search { display: flex; width: 141px; }
.search button { width: 10px; background: #858585; }
.search button svg { width: 8px; height: 14px; }
.search input { flex: 1; background: #fff; border: 1px solid #999; padding-left: 2px; font-size: 8px; font-style: italic; }
.search input::placeholder { color: #777; opacity: 1; }
.info { width: 161px; display: flex; align-items: center; background: linear-gradient(#a3a3a3, #888); color: #3b3b3b; }
.info > button { width: 18px; }
.info > button.user { width: 36px; gap: 1px; color: #f4f4f4; }
.info .user svg { color: #333; }
.vs { width: 1px; height: 13px; background: #777; margin: 0 8px; }
.win { width: 119px; background: #fff; display: flex; justify-content: space-around; padding: 0 1px; color: #999; }
.win svg { width: 14px; height: 14px; }
.menu { display: flex; background: linear-gradient(#9c9c9c, #707070); color: #f2f2f2; padding-left: 1px; }
.menu > button { padding: 0 9px; }
.menu > button.on { background: linear-gradient(#666, #484848); outline: 1px solid #8a8a8a; outline-offset: -1px; }
.doc { margin-left: auto; display: flex; gap: 1px; color: #333; padding-right: 1px; }
.doc svg { width: 11px; height: 11px; }

.dock { padding: 1px 0 4px; display: flex; flex-direction: column; gap: 2px; flex: none; overflow: hidden; }
.row { display: flex; height: 17px; }
.grip { width: 7px; flex: none; background: repeating-linear-gradient(#4c4c4c 0 1px, #666 1px 2px); border-right: 2px solid #555; border-left: 2px solid #555; }
.wide { margin-left: 2px; width: 6px; }
.tb { display: flex; align-items: center; background: #ececec; color: #5d646c; border-bottom: 1px solid #ccc; flex: none; margin-right: 1px; }
.tb > button { width: 17px; height: 16px; }
.tb > button svg { width: 15px; height: 15px; }
.tb > button.dd { width: 8px; }
.tb > button.dd svg { width: 8px; height: 14px; }
.tb > i { width: 4px; height: 13px; border-left: 1px solid #aaa; border-right: 1px solid #fff; background: #ddd; }
.rest { flex: 1; }
.std { width: 87px; padding-left: 13px; }
.iso { flex: 1; padding-left: 13px; }
.ws { width: 127px; padding-left: 6px; }
.layer { width: 218px; margin: 0 1px; }
.li { width: 12px; height: 12px; color: #555; }
.sw { width: 8px; height: 8px; border: 1px solid #222; background: #fff; margin: 0 4px 0 2px; flex: none; }
.by { font: bold 8px/12px "Liberation Serif", serif; }
.by > i { width: 5px; }
.by .combo { border: 1px solid #cfcfcf; }
.c1 { width: 110px; padding-left: 2px; }
.c2 { width: 114px; }
.c3 { width: 92px; }
.c4 { width: 86px; padding-left: 6px; }
.by .c4, .c4 .cv { background: #c6c6c6; color: #999; font-weight: 400; }
.ln { width: 44px; border-top: 1px solid #222; margin: 0 3px 0 1px; flex: none; }
.short { width: 25px; }

.work { flex: 1; min-height: 0; display: flex; overflow: hidden; }
.side { width: 18px; background: #ececec; color: #5d646c; flex: none; align-self: flex-start; border-left: 1px solid #999; }
.side button { width: 17px; height: 16px; }
.side button svg { width: 14px; height: 14px; }
.hgrip { display: block; height: 6px; background: repeating-linear-gradient(#666 0 1px, #444 1px 3px); }
.hs { display: block; height: 2px; margin: 1px 2px; background: #ccc; }
.rside { margin-left: 4px; margin-right: 2px; display: flex; flex-direction: column; gap: 1px; }
.frame { flex: 1; min-width: 0; margin-left: 4px; display: grid; grid-template: minmax(0, 1fr) 11px / 1fr 12px; border: 1px solid #bbb; background: #efefef; }
.canvas { position: relative; overflow: hidden; background-color: #000; background-image: linear-gradient(#1a1a25 1px, transparent 1px), linear-gradient(90deg, #1a1a25 1px, transparent 1px), linear-gradient(#0e0e12 1px, transparent 1px), linear-gradient(90deg, #0e0e12 1px, transparent 1px); background-size: 45px 45px, 45px 45px, 9px 9px, 9px 9px; background-position: 43px 35px, 43px 35px, 7px 8px, 7px 8px; }
.sel { position: absolute; left: 398px; top: -1px; width: 332px; height: 60px; background: rgba(0, 90, 22, .74); border: 1px dashed #e0e8e0; }
.drawing { position: absolute; left: 0; top: 0; }
.drawing text { font: 10px "Liberation Mono", monospace; fill: #d8cfc4; stroke: none; }
.vp { position: absolute; left: 3px; top: 3px; color: #ddd; }
.cube { position: absolute; right: 12px; top: 10px; width: 66px; height: 66px; border: 7px solid #2e2e2e; border-radius: 50%; color: #a8a8a8; font-size: 11px; display: flex; align-items: center; justify-content: center; }
.cube button { width: 27px; height: 27px; background: #9c9c9c; color: #4a4c55; font-size: 17px; line-height: 20px; border: 3px solid #adadad; }
.cube span { position: absolute; }
.n { top: -9px; }
.s { bottom: -9px; }
.w { left: -10px; }
.e { right: -10px; }
.wcs { position: absolute; right: 28px; top: 91px; width: 35px; height: 12px; border: 1px solid #9a9aa6; border-radius: 3px; background: #777782; color: #3a3a40; font: 7px/9px "Liberation Sans", sans-serif; gap: 4px; }
.wcs svg { width: 8px; height: 8px; }
.navbar { position: absolute; right: 2px; top: 122px; width: 24px; height: 156px; border-radius: 3px; background: #484848; color: #333; }
.float { position: absolute; left: 51px; top: 21px; height: 16px; display: flex; align-items: center; background: #ececec; color: #5d646c; }
.float .grip { height: 16px; width: 6px; }
.float > button { width: 17px; height: 16px; }
.float > button svg { width: 14px; height: 14px; }
.float > i:not(.grip) { width: 3px; height: 13px; border-left: 1px solid #aaa; }
.fiso { width: 90px; padding-left: 14px; border: 1px solid #ccc; }
.float > button.x { width: 6px; background: #555; }
.float > button.x svg { width: 7px; }
.vbar { display: flex; flex-direction: column; align-items: center; padding: 3px 0; color: #444; background: #efefef; }
.vbar svg, .hbar svg { width: 8px; height: 8px; stroke-width: 1.5; }
.vbar b { width: 11px; height: 13px; background: #c8c8c8; margin-top: 1px; }
.vbar .end { margin-top: auto; }
.tabs { grid-column: 1 / 3; display: flex; align-items: center; background: #efefef; line-height: 11px; }
.tnav { display: flex; width: 40px; color: #666; }
.tnav button { width: 10px; height: 11px; border: 1px solid #bbb; }
.tnav svg { width: 9px; height: 9px; }
.tab { height: 11px; padding: 0 6px 0 4px; background: linear-gradient(110deg, transparent calc(100% - 4px), #333 calc(100% - 4px), #333 calc(100% - 3px), transparent calc(100% - 3px)); }
.tab.on { background: #000; color: #fff; padding: 0 8px; clip-path: polygon(0 0, 100% 0, calc(100% - 4px) 100%, 5px 100%); }
.hbar { display: flex; align-items: center; width: 332px; border-left: 3px solid #bbb; padding: 0 14px 0 3px; color: #444; }
.hbar b { width: 12px; height: 10px; background: #ccc; margin-left: auto; margin-right: 4px; }

.cmd { flex: none; display: flex; margin-top: 2px; height: 43px; }
.cgrip { width: 12px; background: linear-gradient(#555 0 1px, #999 1px 2px, #555 2px 3px, transparent 3px) 1px 3px / 9px 4px no-repeat #a4a4a4; }
.cbody { flex: 1; background: #c8c8c8; font: 9px/11px "Liberation Mono", "Noto Sans CJK SC", monospace; color: #222; white-space: pre; display: flex; flex-direction: column; }
.cbody span { font: 10px/11px "Noto Sans CJK SC", sans-serif; }
.cbody p { height: 12px; }
.hist { height: 30px; }
.cbody .prompt { flex: 1; background: #fff; padding-top: 1px; }

.status { flex: none; height: 17px; display: flex; background: linear-gradient(#9c9c9c, #747474); border-top: 1px solid #666; }
.xyz { width: 159px; padding-left: 8px; display: flex; gap: 6px; align-items: center; font: 9px/12px "Liberation Serif", serif; color: #111; }
.modes { display: flex; color: #444; }
.modes button { width: 16px; background: linear-gradient(#bbb, #999); border-right: 1px solid #777; }
.modes button svg { width: 13px; height: 13px; }
.modes button.on { background: linear-gradient(#d8eef4, #93cfdf); }
.model { width: 240px; }
.model button.m { width: 21px; color: #111; }

.task { flex: none; height: 29px; display: flex; background: linear-gradient(90deg, #04161c, #06242a); color: #fff; }
.start { width: 35px; }
.start svg { width: 13px; height: 13px; }
.find { width: 253px; background: #f2f2f2; display: flex; align-items: center; padding: 0 8px 0 6px; gap: 6px; }
.find svg { width: 18px; height: 18px; }
.find svg:last-child { width: 15px; height: 15px; }
.find input { flex: 1; font-size: 10px; color: #333; }
.find input::placeholder { color: #333; opacity: 1; }
.app-i { width: 36px; border-bottom: 2px solid #7fc4d8; }
.app-i:not(.on) { width: 28px; margin: 0 4px; }
.app-i.on { background: #334348; margin-left: 1px; }
.app-i svg { width: 17px; height: 17px; }

.paws { position: absolute; right: 126px; bottom: 91px; width: 34px; height: 14px; fill: #fff; stroke: #ddd; }
.wm { position: absolute; left: 767px; bottom: 20px; display: flex; flex-direction: column; color: rgba(255, 255, 255, .78); font: 24px/28px "Liberation Sans", sans-serif; }
.wm b { font-size: 36px; line-height: 38px; color: #f2f2f2; }
.brand { position: absolute; right: 0; bottom: 0; width: 200px; height: 95px; background: #223055; color: #d0d0d0; display: flex; align-items: center; gap: 6px; padding-left: 10px; }
.brand svg { width: 48px; height: 62px; }
.b1 { font: 500 28px/34px "Noto Sans CJK SC", sans-serif; display: flex; }
.b1 span { font: 500 35px/34px Roboto, sans-serif; }
.b2 { font: 24px/28px Inter, sans-serif; }
.arrow { position: absolute; left: 0; top: 0; color: #860014; stroke-width: 4; stroke-linecap: round; pointer-events: none; }
```
